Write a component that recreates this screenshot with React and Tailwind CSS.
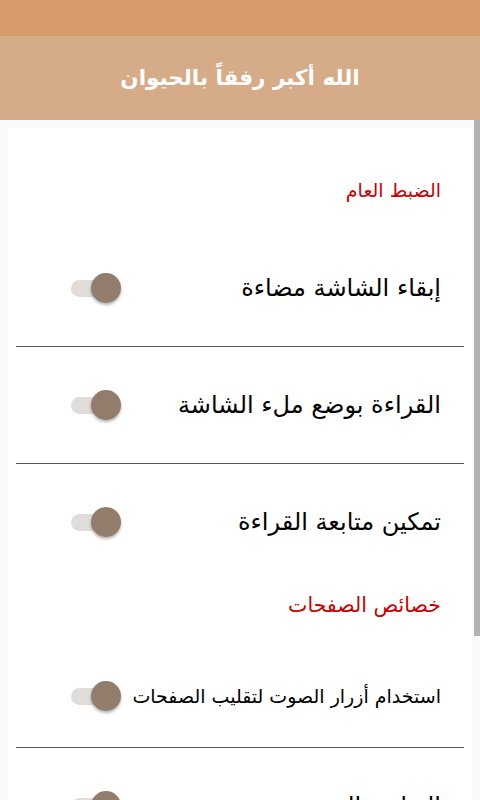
const font = { fontFamily: '"DejaVu Sans", sans-serif' };

function Toggle() {
  return (
    <div className="relative w-[50px] h-[30px] shrink-0">
      <div className="absolute left-0 top-[7px] w-[44px] h-[17px] rounded-full bg-[#e0dcd9]" />
      <div className="absolute right-0 top-0 w-[30px] h-[30px] rounded-full bg-[#927c6c] shadow-[0_2px_3px_rgba(0,0,0,0.3)]" />
    </div>
  );
}

function Row({ label, small, divider }) {
  return (
    <div className={`mx-2 ${divider ? "border-b border-[#555]" : ""}`}>
      <div
        className={`flex items-center justify-between pr-[23px] pl-[55px] ${
          small ? "h-[102px]" : "h-[116px]"
        }`}
      >
        <span
          className={`${small ? "text-[19px]" : "text-[24px]"} text-black leading-none whitespace-nowrap`}
        >
          {label}
        </span>
        <Toggle />
      </div>
    </div>
  );
}

export default function App() {
  return (
    <div dir="rtl" className="w-[480px] h-[800px] overflow-hidden bg-[#fafafa] relative" style={font}>
      <div className="h-[36px] bg-[#d59b6b]" />
      <div className="h-[84px] bg-[#d6ab87] flex items-center justify-center">
        <h1 className="text-white text-[21.5px] font-bold">الله أكبر رفقاً بالحيوان</h1>
      </div>

      <div className="absolute right-0 top-[120px] w-[6px] h-[516px] bg-[#b3b3b3]" />

      <div className="mt-2 mr-2 ml-2 bg-white">
        <div className="pt-[50px] pb-[28px] pr-[31px] text-[19px] text-[#cc0000] leading-[24px]">
          الضبط العام
        </div>
        <Row label="إبقاء الشاشة مضاءة" divider />
        <Row label="القراءة بوضع ملء الشاشة" divider />
        <Row label="تمكين متابعة القراءة" />
        <div className="pt-[13px] pb-[28px] pr-[31px] text-[20.5px] text-[#cc0000] leading-[24px]">
          خصائص الصفحات
        </div>
        <Row label="استخدام أزرار الصوت لتقليب الصفحات" small divider />
        <Row label="التقليب العمودي" divider />
      </div>
    </div>
  );
}
